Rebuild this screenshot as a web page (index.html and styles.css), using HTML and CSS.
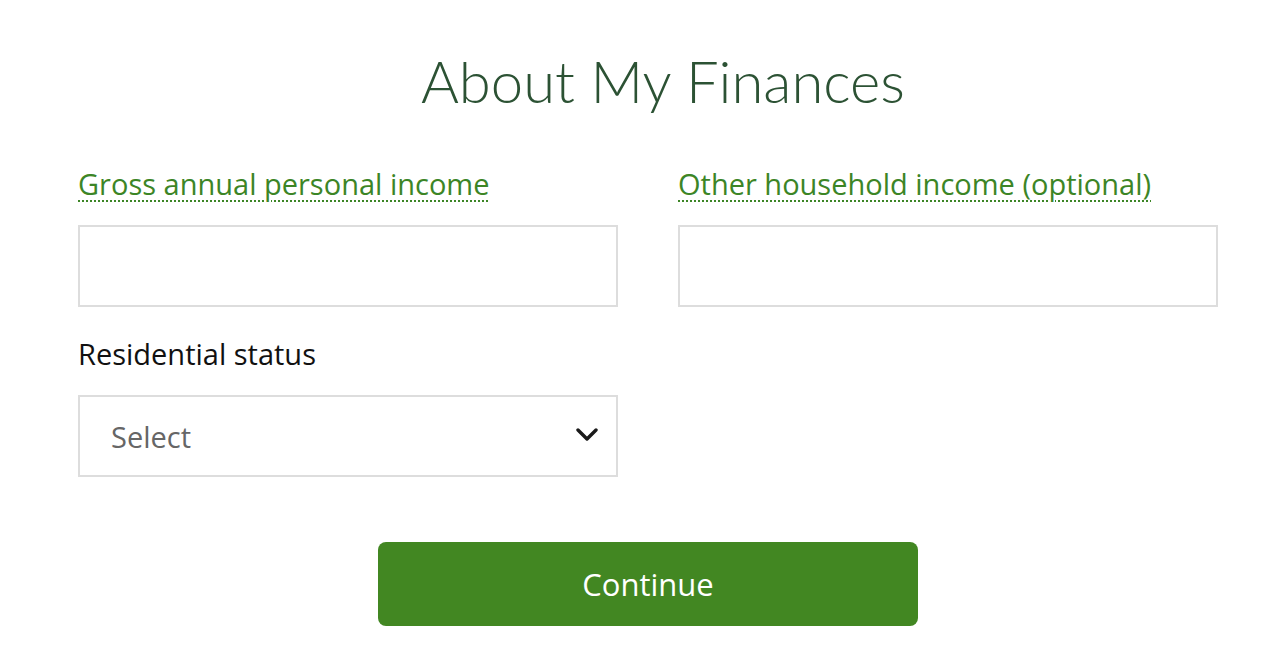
FILE: index.html
```html
<!DOCTYPE html>
<html lang="en">
<head>
    <meta charset="UTF-8">
    <meta name="viewport" content="width=device-width, initial-scale=1.0">
    <title>About My Finances</title>
    <link rel="stylesheet" href="styles.css">
</head>
<body>
    <main class="page">
        <h1 class="title">About My Finances</h1>
        <form class="finances-form">
            <div class="grid">
                <div class="field">
                    <label class="label label-help" for="grossIncome">Gross annual personal income</label>
                    <input class="text-input" type="text" id="grossIncome" name="grossIncome">
                </div>
                <div class="field">
                    <label class="label label-help" for="otherIncome">Other household income (optional)</label>
                    <input class="text-input" type="text" id="otherIncome" name="otherIncome">
                </div>
                <div class="field">
                    <label class="label" for="residentialStatus">Residential status</label>
                    <div class="select-wrap">
                        <select class="select" id="residentialStatus" name="residentialStatus">
                            <option>Select</option>
                            <option>Homeowner</option>
                            <option>Renting</option>
                            <option>Living with parents</option>
                        </select>
                        <svg class="chevron" width="22" height="14" viewBox="0 0 22 14">
                            <path d="M2 2 L11 11 L20 2" fill="none" stroke="#1a1a1a" stroke-width="3.4" stroke-linecap="round" stroke-linejoin="round"/>
                        </svg>
                    </div>
                </div>
            </div>
            <div class="actions">
                <button class="btn-continue" type="button">Continue</button>
            </div>
        </form>
    </main>
</body>
</html>
```

FILE: styles.css
```css
body {
    margin: 0;
    background-color: #ffffff;
    font-family: "Open Sans", "Noto Sans", sans-serif;
}
.page {
    width: 1140px;
    margin-left: 78px;
    padding-top: 43px;
}
.title {
    margin: 0;
    padding-left: 30px;
    text-align: center;
    font-family: Lato, "Noto Sans", sans-serif;
    font-weight: 300;
    font-size: 58px;
    line-height: 76px;
    color: #2c5234;
}
.grid {
    display: grid;
    grid-template-columns: 540px 540px;
    column-gap: 60px;
    row-gap: 27px;
    margin-top: 45px;
}
.field {
    display: flex;
    flex-direction: column;
}
.label {
    font-size: 29px;
    line-height: 40px;
    color: #111111;
    margin-bottom: 21px;
}
.label-help {
    align-self: flex-start;
    color: #3c8526;
    text-decoration: underline dotted;
    text-decoration-thickness: 2px;
    text-underline-offset: 5px;
}
.text-input {
    box-sizing: border-box;
    height: 82px;
    border: 2px solid #dddddd;
    font-size: 29px;
    padding: 0 31px;
    font-family: inherit;
}
.select-wrap {
    position: relative;
}
.select {
    box-sizing: border-box;
    width: 100%;
    height: 82px;
    border: 2px solid #dddddd;
    border-radius: 0;
    background-color: #ffffff;
    appearance: none;
    font-family: inherit;
    font-size: 29px;
    color: #666666;
    padding: 0 31px;
}
.chevron {
    position: absolute;
    right: 20px;
    top: 33px;
    pointer-events: none;
}
.actions {
    display: flex;
    justify-content: center;
    margin-top: 65px;
}
.btn-continue {
    width: 540px;
    height: 84px;
    border: none;
    border-radius: 8px;
    background-color: #428722;
    color: #ffffff;
    font-family: inherit;
    font-size: 31px;
}
```
